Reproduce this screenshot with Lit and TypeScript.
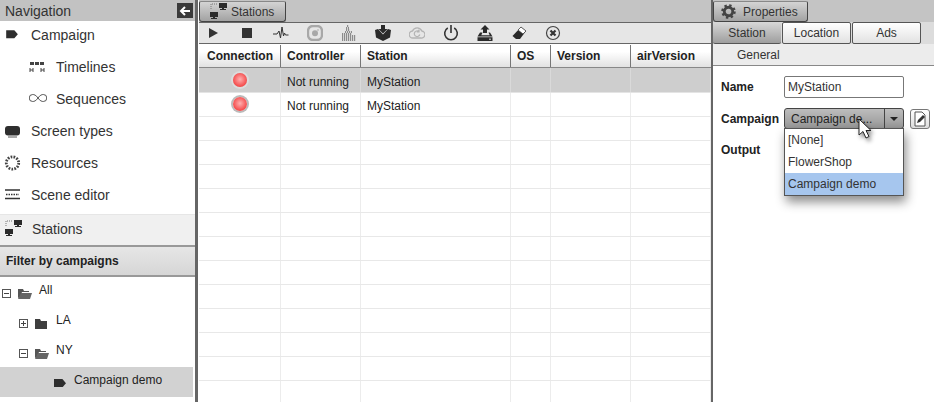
import { LitElement, html, css, svg } from "lit";
import { customElement } from "lit/decorators.js";

const tag = svg`<path d="M1 1h7l3 3.500L8 8H1z" fill="#2e2e2e"/>`;
const monitor = (x: number, y: number) => svg`<path d="M${x} ${y}h8v5h-3v1h2v1h-6v-1h2v-1h-3z" fill="#2b2b2b"/>`;
const stationsIcon = svg`<svg class="st" viewBox="0 0 20 20" width="20" height="20">${monitor(10, 1)}${monitor(1, 10)}<path d="M2 7V2h6" fill="none" stroke="#777" stroke-dasharray="1 1"/></svg>`;

const navItems = [
  { label: "Campaign", sub: false, icon: svg`<svg viewBox="0 0 12 9" width="14" height="10.500">${tag}</svg>` },
  { label: "Timelines", sub: true, icon: svg`<svg viewBox="0 0 16 12" width="16" height="12"><path d="M1 1h4v3H1zM6 1h4v3H6zM11 1h4v3h-4z" fill="#444"/><path d="M1 7v4M4 7v4M1 9h3M12 7v4M15 7v4M12 9h3" stroke="#444" fill="none"/></svg>` },
  { label: "Sequences", sub: true, icon: svg`<svg viewBox="0 0 18 10" width="18" height="10"><path d="M9 5C7 2 5 1.500 3.700 1.500A3.500 3.500 0 0 0 3.700 8.500C5 8.500 7 8 9 5C11 2 13 1.500 14.300 1.500A3.500 3.500 0 0 1 14.300 8.500C13 8.500 11 8 9 5Z" fill="none" stroke="#555"/></svg>` },
  { label: "Screen types", sub: false, icon: svg`<svg viewBox="0 0 16 13" width="16" height="13"><rect x="0" y="1" width="15" height="9.500" rx="3" fill="#2e2e2e"/><path d="M3 12h9" stroke="#555"/></svg>` },
  { label: "Resources", sub: false, icon: svg`<svg viewBox="0 0 16 16" width="16" height="16" style="overflow:visible"><circle cx="7.500" cy="6" r="6.200" fill="none" stroke="#444" stroke-width="2.800" stroke-dasharray="1.700 1.250"/></svg>` },
  { label: "Scene editor", sub: false, icon: svg`<svg viewBox="0 0 16 11" width="16" height="11"><path d="M-1 1h16M-1 9.500h16" stroke="#333" stroke-width="1.300"/><path d="M1 5.500h13" stroke="#333" stroke-width="1.500" stroke-dasharray="1.500 1"/></svg>` },
];

const toolbar = [
  svg`<path d="M4 3l9 5-9 5z" fill="#333"/>`,
  svg`<rect x="3" y="3" width="10" height="10" fill="#333"/>`,
  svg`<path d="M0 9h4l2-3 1.500 7L9 2l1.500 9 1-3 1 2h3" fill="none" stroke="#333" stroke-linejoin="round"/>`,
  svg`<rect x="1" y="1" width="14" height="14" rx="5" fill="none" stroke="#a8a8a8" stroke-width="2.400"/><circle cx="8" cy="8.300" r="3" fill="#a8a8a8"/><circle cx="11" cy="5" r=".8" fill="#a8a8a8"/>`,
  svg`<path d="M1 15h14M1 13h14M1 11h14M1 9h10M4 7h7M5 5h4M5 3h3M6 1h2" stroke="#333" stroke-dasharray="1.200 .8" fill="none"/>`,
  svg`<path d="M6 0h4v4h2.500L8 8.500 3.500 4H6zM0 5l3-1 5 5.500V16L1 12.500zM16 5l-3-1-5 5.500V16l7-3.500z" fill="#2a2a2a"/>`,
  svg`<path d="M4 13a3.500 3.500 0 0 1-.5-7A5 5 0 0 1 12.800 6 3.500 3.500 0 0 1 12 13z" fill="none" stroke="#b4b4b4" stroke-width="1.300"/><path d="M10.800 9.500a2.800 2.800 0 1 1-1-3M10 4.500v2.300H7.800" fill="none" stroke="#b4b4b4" stroke-width="1.200"/>`,
  svg`<path d="M4.800 3a6.300 6.300 0 1 0 6.400 0" fill="none" stroke="#333" stroke-width="1.600"/><path d="M8 0v8" stroke="#333" stroke-width="1.600"/>`,
  svg`<path d="M8 0l4.500 4.500H10V8H6V4.500H3.500zM3 7.500l-2.500 4h15l-2.500-4h-1.500l1.200 2.800H4.300l1.200-2.800zM.5 12.300h15V16H.5z" fill="#2a2a2a"/><path d="M12 14.200h2" stroke="#ddd"/>`,
  svg`<path d="M10 2l5 4-6 8H5L1.500 11z" fill="#2a2a2a"/><path d="M7 5l5 4 3-3-5-4z" fill="#fff" stroke="#333" stroke-width=".7"/>`,
  svg`<circle cx="8" cy="8" r="6.500" fill="none" stroke="#444" stroke-width="1.200"/><path d="M5.500 5.500l5 5M10.500 5.500l-5 5" stroke="#333" stroke-width="2.200"/>`,
];

const columns = ["Connection", "Controller", "Station", "OS", "Version", "airVersion"];

@customElement("app-root")
export class AppRoot extends LitElement {
  static styles = css`
    :host { display: block; width: 934px; height: 402px; overflow: hidden; background: #fff; font-family: "Liberation Sans", Arial, sans-serif; color: #222; font-size: 12px; }
    .app { display: grid; grid-template-columns: 198px 513px 223px; height: 402px; background: #fff; position: relative; }
    .left { display: flex; flex-direction: column; height: 402px; border-right: 3px solid #666; box-sizing: border-box; overflow: hidden; }
    .nav-head { height: 21px; flex: none; background: #c2c2c2; display: flex; align-items: center; justify-content: space-between; padding: 1px 2px 0 5px; box-sizing: border-box; font-size: 14px; color: #333; }
    .back { width: 16px; height: 15px; background: #3a3a3a; display: flex; align-items: center; justify-content: center; margin-top: -1px; }
    .nav-list { margin-top: -2px; flex: none; }
    .item { height: 32px; flex: none; display: flex; align-items: center; font-size: 14px; color: #333; padding-left: 5px; }
    .item .ic { width: 26px; display: flex; }
    .item.sub { padding-left: 29px; }
    .item.sub .ic { width: 27px; }
    .item.active { background: #f0f0f0; border-top: 1px solid #e6e6e6; box-sizing: border-box; height: 33px; border-bottom: 2px solid #999; margin-top: 3px; padding-bottom: 3px; }
    .item.active .ic { width: 27px; }
    .st { margin-left: -1px; }
    .filter { height: 30px; flex: none; box-sizing: border-box; background: linear-gradient(#e6e6e6, #d6d6d6); border-bottom: 2px solid #999; display: flex; align-items: center; padding-left: 6px; font-weight: bold; color: #222; }
    .tree { flex: 1; font-size: 12px; color: #222; }
    .t { height: 30px; display: flex; align-items: flex-start; box-sizing: border-box; padding-top: 7px; }
    .t.sel { background: #d2d2d2; width: 193px; }
    .exp { width: 7px; height: 7px; border: 1px solid #555; margin: 5px 6px 0 2px; position: relative; flex: none; }
    .exp::before { content: ""; position: absolute; left: 1px; right: 1px; top: 3px; height: 1px; background: #444; }
    .exp.plus::after { content: ""; position: absolute; top: 1px; bottom: 1px; left: 3px; width: 1px; background: #444; }
    .folder { margin: 4px 6px 0 0; flex: none; }
    .indent { margin-left: 19px; }
    .t.sel .tagi { margin: 5px 8px 0 54px; }
    .t .lab { margin-top: -1px; }
    .center { display: flex; flex-direction: column; height: 402px; margin-left: 1px; overflow: hidden; }
    .strip { height: 23px; flex: none; box-sizing: border-box; background: #c4c4c4; border-bottom: 1px solid #666; display: flex; align-items: flex-start; }
    .tab { height: 21px; box-sizing: border-box; margin-top: 1px; background: linear-gradient(#d4d4d4, #a2a2a2); border: 1px solid #444; border-top-color: #888; border-radius: 2px 2px 3px 3px; display: flex; align-items: center; font-size: 12px; color: #333; }
    .tab.s { width: 87px; padding-left: 10px; gap: 2px; }
    .tab.p { width: 95px; padding-left: 7px; gap: 7px; }
    .tools { height: 21px; flex: none; background: #e6e6e6; display: flex; align-items: center; padding-left: 6px; gap: 18px; box-sizing: border-box; border-bottom: 1px solid #666; }
    .tools svg { flex: none; }
    .thead { display: grid; height: 23px; flex: none; box-sizing: border-box; background: linear-gradient(#fff, #fff 30%, #e2e2e2); border-bottom: 1px solid #888; margin-top: 1px; }
    .grid6 { grid-template-columns: 82px 80px 150px 40px 80px 80px; }
    .th { font-weight: bold; color: #222; border-right: 1px solid #777; display: flex; align-items: center; padding-left: 6px; box-sizing: border-box; font-size: 12px; }
    .th:first-child { padding-left: 8px; }
    .th:last-child { border-right: 0; }
    .row { display: grid; height: 24px; box-sizing: border-box; border-bottom: 1px solid #e8e8e8; flex: none; }
    .row.sel { background: #cecece; border-bottom-color: #e4e4e4; height: 25px; }
    .td { border-right: 1px solid #ececec; display: flex; align-items: center; padding: 3px 0 0 6px; box-sizing: border-box; font-size: 12px; color: #222; }
    .row.sel .td { border-right-color: #dadada; }
    .td.led { padding: 0 0 0 34px; }
    .ball { width: 14px; height: 14px; border-radius: 50%; background: radial-gradient(circle at 50% 45%, #ffb0b0, #f55050 65%, #e03838); box-shadow: 0 0 0 2px #dcdcdc; }
    .row:not(.sel) .ball { box-shadow: 0 0 0 2px #bbb; margin-top: -1px; }
    .right { display: flex; flex-direction: column; height: 402px; border-left: 2px solid #666; box-sizing: border-box; position: relative; overflow: hidden; }
    .tabs { height: 22px; margin-top: -1px; flex: none; background: #dcdcdc; display: flex; align-items: flex-start; gap: 1px; position: relative; }
    .ptab { width: 69px; height: 22px; box-sizing: border-box; border: 1px solid #555; border-radius: 2px; background: linear-gradient(#fff, #e2e2e2); display: flex; align-items: center; justify-content: center; color: #333; font-size: 12px; }
    .ptab.on { background: linear-gradient(#d8d8d8, #9e9e9e); border: 0; border-bottom: 1px solid #555; width: 68px; }
    .sub-head { height: 22px; flex: none; box-sizing: border-box; background: #ececec; border-bottom: 1px solid #888; display: flex; align-items: center; padding-left: 24px; font-size: 12px; color: #333; }
    .form { display: grid; grid-template-columns: 63px 120px auto; align-items: center; padding: 10px 0 0 8px; row-gap: 10px; justify-content: start; }
    .lab2 { font-weight: bold; color: #222; }
    .lab2.out { margin-top: 4px; }
    .input { grid-column: 2 / 4; width: 120px; height: 22px; box-sizing: border-box; border: 1px solid #777; border-radius: 2px; display: flex; align-items: center; padding-left: 3px; color: #333; }
    .select { width: 120px; height: 21px; box-sizing: border-box; border: 1px solid #444; border-radius: 3px; background: linear-gradient(#bdbdbd, #979797); display: flex; color: #222; }
    .select .v { flex: 1; border-right: 1px solid #444; padding-left: 6px; display: flex; align-items: center; }
    .select .a { width: 18px; display: flex; align-items: center; justify-content: center; }
    .arrow { width: 0; height: 0; border-left: 4px solid transparent; border-right: 4px solid transparent; border-top: 4px solid #222; }
    .edit { width: 20px; height: 20px; box-sizing: border-box; border: 1px solid #777; border-radius: 3px; margin-left: 6px; display: flex; align-items: center; justify-content: center; background: linear-gradient(#fff, #ddd); }
    .menu { position: absolute; left: 71px; top: 128px; width: 120px; height: 68px; box-sizing: border-box; background: #fff; border: 1px solid #555; box-shadow: 2px 6px 10px rgba(0, 0, 0, .45); z-index: 2; }
    .opt { height: 22px; display: flex; align-items: center; padding-left: 3px; color: #333; font-size: 12px; }
    .opt.on { background: #a6c6ee; }
    .cursor { position: absolute; left: 858px; top: 118px; z-index: 3; filter: drop-shadow(2px 3px 2px rgba(0,0,0,.45)); }
  `;

  private folder(open: boolean) {
    return open
      ? svg`<svg class="folder" viewBox="0 0 16 12" width="16" height="12"><path d="M1 1h5l1 2h5v1H5L3 9 1 10z" fill="#555"/><path d="M4 5h11l-2 6H1z" fill="#666"/></svg>`
      : svg`<svg class="folder" viewBox="0 0 16 12" width="16" height="12"><path d="M1 1h5l1 2h6v8H1z" fill="#3e3e3e"/></svg>`;
  }

  render() {
    const rows = Array.from({ length: 14 }, (_, i) => i);
    return html`<div class="app">
      <div class="left">
        <div class="nav-head"><span>Navigation</span><span class="back"><svg viewBox="0 0 12 10" width="12" height="10"><path d="M6 1L2 5l4 4M2 5h9" fill="none" stroke="#fff" stroke-width="2"/></svg></span></div>
        <div class="nav-list">${navItems.map(n => html`<div class="item ${n.sub ? "sub" : ""}"><span class="ic"><svg width=${n.sub ? 18 : 16} height="16" viewBox="0 0 ${n.sub ? 18 : 16} 16" style="overflow:visible">${svg`<g transform="translate(0,2)">${n.icon}</g>`}</svg></span>${n.label}</div>`)}</div>
        <div class="item active"><span class="ic">${stationsIcon}</span>Stations</div>
        <div class="filter">Filter by campaigns</div>
        <div class="tree">
          <div class="t"><span class="exp"></span>${this.folder(true)}<span class="lab">All</span></div>
          <div class="t"><span class="exp plus indent"></span>${this.folder(false)}<span class="lab">LA</span></div>
          <div class="t"><span class="exp indent"></span>${this.folder(true)}<span class="lab">NY</span></div>
          <div class="t sel"><svg class="tagi" viewBox="1 1 10 7" width="12" height="8.400">${tag}</svg><span class="lab">Campaign demo</span></div>
        </div>
      </div>
      <div class="center">
        <div class="strip"><div class="tab s">${stationsIcon}Stations</div></div>
        <div class="tools">${toolbar.map(t => html`<svg viewBox="0 0 16 16" width="16" height="16">${t}</svg>`)}</div>
        <div class="thead grid6">${columns.map(c => html`<div class="th">${c}</div>`)}</div>
        <div class="row grid6 sel"><div class="td led"><span class="ball"></span></div><div class="td">Not running</div><div class="td">MyStation</div><div class="td"></div><div class="td"></div><div class="td"></div></div>
        <div class="row grid6"><div class="td led"><span class="ball"></span></div><div class="td">Not running</div><div class="td">MyStation</div><div class="td"></div><div class="td"></div><div class="td"></div></div>
        ${rows.map(() => html`<div class="row grid6">${columns.map(() => html`<div class="td"></div>`)}</div>`)}
      </div>
      <div class="right">
        <div class="strip"><div class="tab p"><svg viewBox="0 0 16 16" width="15" height="15"><circle cx="8" cy="8" r="4.500" fill="none" stroke="#444" stroke-width="3"/><circle cx="8" cy="8" r="6.500" fill="none" stroke="#444" stroke-width="2.500" stroke-dasharray="2.500 2.600"/></svg>Properties</div></div>
        <div class="tabs"><div class="ptab on">Station</div><div class="ptab">Location</div><div class="ptab">Ads</div></div>
        <div class="sub-head">General</div>
        <div class="form">
          <div class="lab2">Name</div><div class="input">MyStation</div>
          <div class="lab2">Campaign</div><div class="select"><span class="v">Campaign de...</span><span class="a"><span class="arrow"></span></span></div><div class="edit"><svg viewBox="0 0 16 16" width="16" height="16"><path d="M3 1h7l3 3v11H3z" fill="#fff" stroke="#555"/><path d="M5 12l1-3 5-5 2 2-5 5z" fill="#333"/></svg></div>
          <div class="lab2 out">Output</div>
        </div>
        <div class="menu"><div class="opt">[None]</div><div class="opt">FlowerShop</div><div class="opt on">Campaign demo</div></div>
      </div>
      <svg class="cursor" viewBox="0 0 14 22" width="14" height="22"><path d="M1 1v16l4-3.500L8 20l3-1.500-3-6h5z" fill="#fff" stroke="#222"/></svg>
    </div>`;
  }
}
